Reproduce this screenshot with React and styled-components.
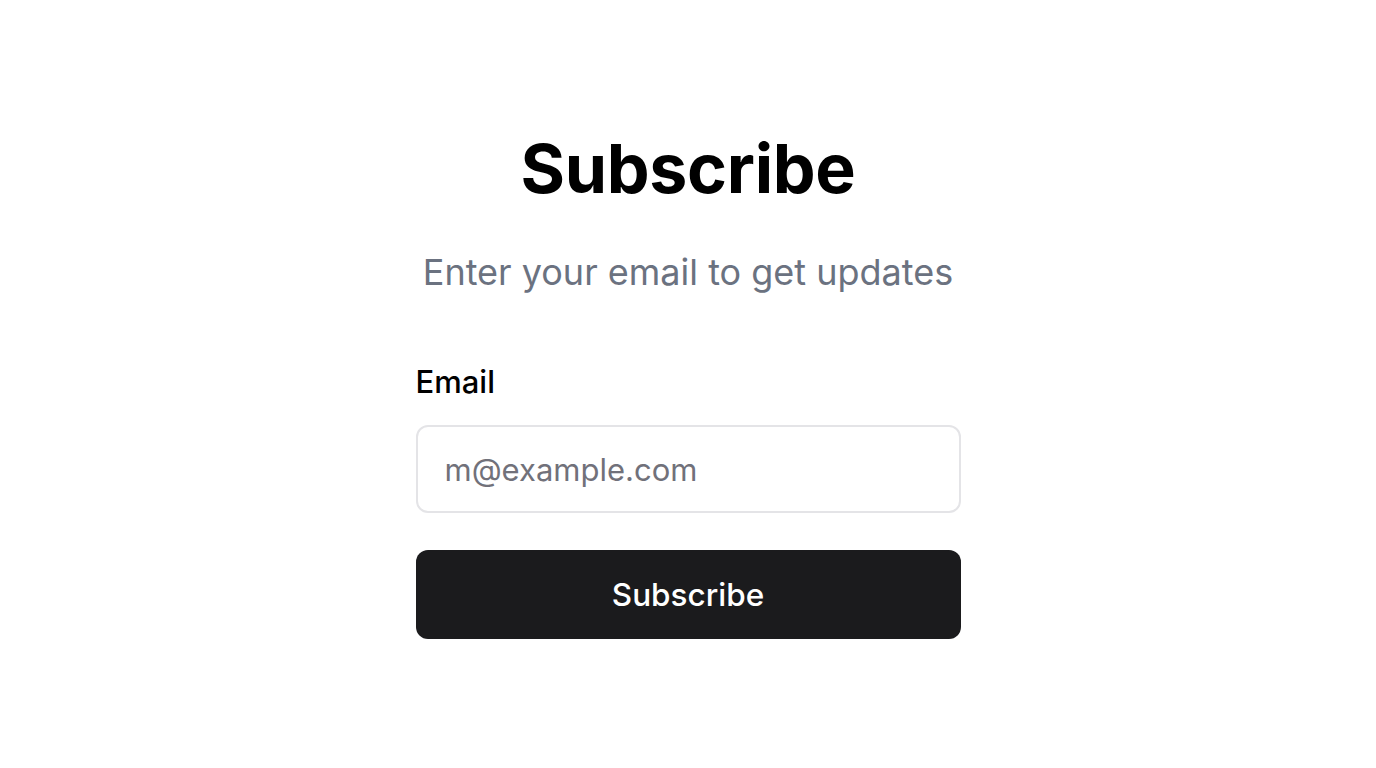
import React from 'react';
import styled, { createGlobalStyle } from 'styled-components';

const GlobalStyle = createGlobalStyle`
  html, body {
    margin: 0;
    padding: 0;
    background: #ffffff;
    font-family: Inter, "Noto Sans", sans-serif;
  }
`;

const Page = styled.div`
  min-height: 768px;
  display: flex;
  justify-content: center;
  padding-top: 128px;
  box-sizing: border-box;
`;

const Card = styled.form`
  width: 545px;
  display: flex;
  flex-direction: column;
`;

const Title = styled.h1`
  margin: 0;
  text-align: center;
  font-size: 68px;
  line-height: 80px;
  font-weight: 700;
  color: #000000;
  letter-spacing: -0.3px;
`;

const Subtitle = styled.p`
  margin: 40px 0 0;
  text-align: center;
  font-size: 36px;
  line-height: 48px;
  color: #6b7280;
`;

const Field = styled.div`
  margin-top: 66px;
  display: flex;
  flex-direction: column;
  gap: 23px;
`;

const Label = styled.label`
  font-size: 31px;
  line-height: 40px;
  font-weight: 500;
  color: #000000;
`;

const Input = styled.input`
  height: 88px;
  box-sizing: border-box;
  border: 2px solid #e4e4e7;
  border-radius: 12px;
  padding: 0 27px;
  font-family: inherit;
  font-size: 31px;
  color: #09090b;
  outline: none;

  &::placeholder {
    color: #71717a;
  }
`;

const Button = styled.button`
  margin-top: 37px;
  height: 89px;
  border: none;
  border-radius: 12px;
  background: #1b1b1d;
  color: #ffffff;
  font-family: inherit;
  font-size: 31.5px;
  font-weight: 500;
  cursor: pointer;
`;

export default function App() {
  return (
    <>
      <GlobalStyle />
      <Page>
        <Card onSubmit={e => e.preventDefault()}>
          <Title>Subscribe</Title>
          <Subtitle>Enter your email to get updates</Subtitle>
          <Field>
            <Label htmlFor="email">Email</Label>
            <Input id="email" type="email" placeholder="m@example.com" />
          </Field>
          <Button type="submit">Subscribe</Button>
        </Card>
      </Page>
    </>
  );
}
